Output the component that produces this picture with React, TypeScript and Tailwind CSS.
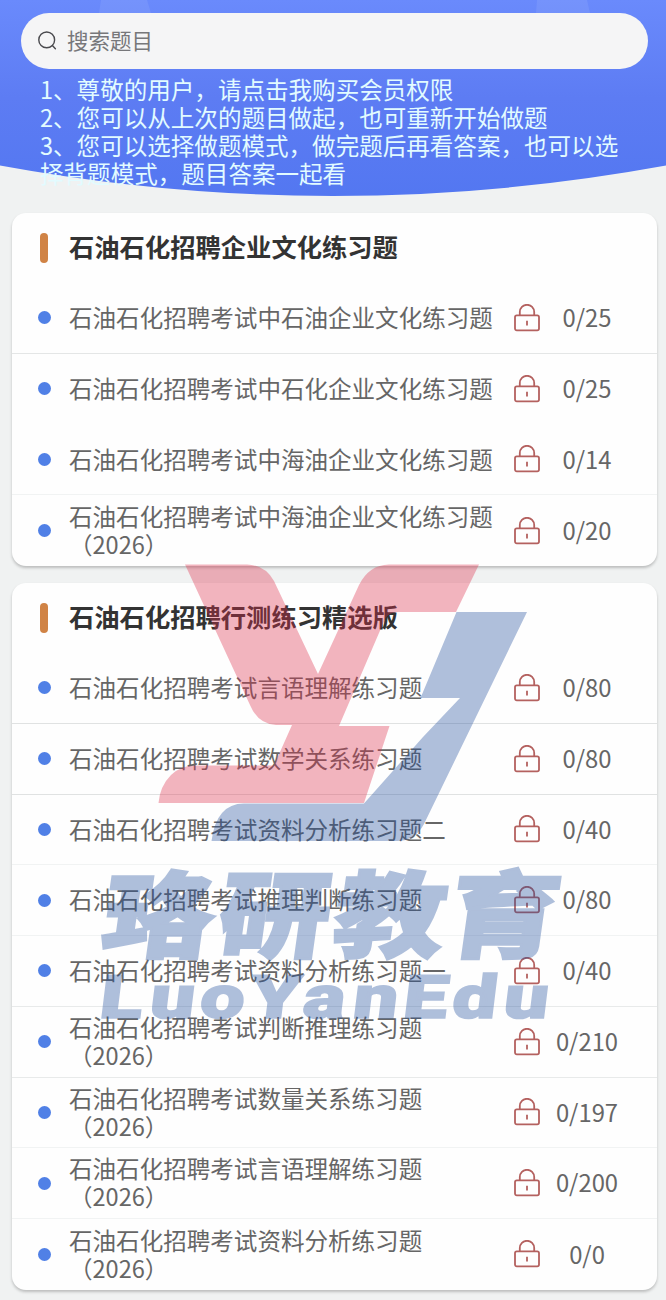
type Exercise = {
  title: string;
  year?: string;
  progress: string;
  divider?: string;
};

type Section = {
  title: string;
  items: Exercise[];
};

const sections: Section[] = [
  {
    title: "石油石化招聘企业文化练习题",
    items: [
      { title: "石油石化招聘考试中石油企业文化练习题", progress: "0/25", divider: "border-[#e4e6e6]" },
      { title: "石油石化招聘考试中石化企业文化练习题", progress: "0/25", divider: "border-transparent" },
      { title: "石油石化招聘考试中海油企业文化练习题", progress: "0/14" },
      { title: "石油石化招聘考试中海油企业文化练习题", year: "（2026）", progress: "0/20" },
    ],
  },
  {
    title: "石油石化招聘行测练习精选版",
    items: [
      { title: "石油石化招聘考试言语理解练习题", progress: "0/80", divider: "border-[#e0e2e2]" },
      { title: "石油石化招聘考试数学关系练习题", progress: "0/80", divider: "border-[#e0e2e2]" },
      { title: "石油石化招聘考试资料分析练习题二", progress: "0/40" },
      { title: "石油石化招聘考试推理判断练习题", progress: "0/80" },
      { title: "石油石化招聘考试资料分析练习题一", progress: "0/40", divider: "border-[#e8eaea]" },
      { title: "石油石化招聘考试判断推理练习题", year: "（2026）", progress: "0/210", divider: "border-[#e8eaea]" },
      { title: "石油石化招聘考试数量关系练习题", year: "（2026）", progress: "0/197" },
      { title: "石油石化招聘考试言语理解练习题", year: "（2026）", progress: "0/200" },
      { title: "石油石化招聘考试资料分析练习题", year: "（2026）", progress: "0/0" },
    ],
  },
];

const notices = [
  "1、尊敬的用户，请点击我购买会员权限",
  "2、您可以从上次的题目做起，也可重新开始做题",
  "3、您可以选择做题模式，做完题后再看答案，也可以选",
  "择背题模式，题目答案一起看",
];

function LockIcon() {
  return (
    <svg
      className="h-7 w-[26px] shrink-0"
      viewBox="0 0 26 28"
      fill="none"
      stroke="#b4615f"
      strokeWidth="1.8"
    >
      <rect x="1" y="11.4" width="24" height="15" rx="1.8" />
      <path d="M5.8 11.4V8a7.2 7.2 0 0 1 14.4 0v3.4" />
      <path d="M13 16.8v4.6" />
    </svg>
  );
}

function SearchIcon() {
  return (
    <svg
      className="h-5 w-5 shrink-0"
      viewBox="0 0 20 20"
      fill="none"
      stroke="#4a4a4e"
      strokeWidth="1.4"
      strokeLinecap="round"
    >
      <circle cx="9.7" cy="8.9" r="7.9" />
      <path d="M15.4 14.6l3 3.2" />
    </svg>
  );
}

function Header() {
  return (
    <header className="relative h-[213px] pt-[13px]">
      <svg
        className="absolute inset-x-0 top-0 h-[197px] w-full"
        viewBox="0 0 666 197"
        preserveAspectRatio="none"
      >
        <defs>
          <linearGradient id="sky" x1="0" y1="0" x2="0" y2="1">
            <stop offset="0" stopColor="#6a8afc" />
            <stop offset="0.5" stopColor="#5d7cf3" />
            <stop offset="1" stopColor="#5377f1" />
          </linearGradient>
        </defs>
        <path d="M0 0H666V165.5Q333 226.5 0 165.5Z" fill="url(#sky)" />
        <path d="M101 0h46l4 13h-52zM537 0h50l3 13h-54z" fill="#fff" fillOpacity="0.08" />
      </svg>

      <div className="relative ml-[21px] mr-[18px] flex h-14 items-center gap-2.5 rounded-full bg-[#f5f5f6] pl-4">
        <SearchIcon />
        <span className="pb-0.5 text-[21.5px] leading-none text-[#77777a]">搜索题目</span>
      </div>

      <div className="relative mt-1.5 pl-10 text-[23.56px] leading-7 text-[#e2fbff]">
        {notices.map((line) => (
          <p key={line} className="whitespace-nowrap">
            {line}
          </p>
        ))}
      </div>
    </header>
  );
}

function ExerciseRow({ item }: { item: Exercise }) {
  return (
    <li
      className={`flex h-[70.75px] items-center border-b pl-[25.5px] last:border-b-0 ${
        item.divider ?? "border-[#f1f3f3]"
      }`}
    >
      <span className="h-[13px] w-[13px] shrink-0 rounded-full bg-[#5080e6]" />
      <div className="ml-[18.5px] w-[445px] whitespace-nowrap pb-[1.5px] text-[23.56px] leading-7 text-[#666]">
        <p>{item.title}</p>
        {item.year && <p>{item.year}</p>}
      </div>
      <LockIcon />
      <span className="w-[94px] pb-[1.5px] text-center text-[23.8px] leading-7 text-[#666]">
        {item.progress}
      </span>
    </li>
  );
}

function SectionCard({ section }: { section: Section }) {
  return (
    <section className="rounded-[14px] bg-[#fefefe] shadow-[0_2px_3px_rgba(0,0,0,0.22)]">
      <div className="flex h-[70px] items-center pl-7">
        <span className="h-[30px] w-2 rounded-full bg-[#d08345]" />
        <h2 className="ml-[21px] pb-[5px] text-[25.3px] font-bold leading-8 text-[#333]">
          {section.title}
        </h2>
      </div>
      <ul>
        {section.items.map((item, index) => (
          <ExerciseRow key={index} item={item} />
        ))}
      </ul>
    </section>
  );
}

function Watermark() {
  return (
    <svg
      className="pointer-events-none absolute left-0 top-0 h-[1300px] w-[666px]"
      viewBox="0 0 666 1300"
    >
      <path
        fill="#dd2c48"
        fillOpacity="0.35"
        d="M185 564.5H247Q265 565 274 581L318 674L359 585Q369 565 389 564.5H479L456 612H398Q389 612 385 619L339 726H389.5L364 803H158.5Q160 786 171 775Q180 766 194 765.5H274L292 725H276Q258 724 250 705Z"
      />
      <path
        fill="#1d4b9b"
        fillOpacity="0.35"
        d="M456.5 612H527L424 824Q415 841 397 841H211.5Q214 822 222 813Q230 803.5 244 803.5H364L423 737L460 698H420.5Z"
      />
      <g fill="#1d4b9b" stroke="#1d4b9b" fontWeight="900" opacity="0.35">
        <text
          transform="translate(99 950) skewX(-8) scale(1.18 1)"
          x="0 98 196 293"
          fontSize="94"
          strokeWidth="2.5"
        >
          珞研教育
        </text>
        <text
          className="font-['Roboto']"
          transform="translate(98 1018) skewX(-7) scale(1.32 1)"
          x="0 38 76 114 154 192 230 267 306"
          fontSize="60"
          strokeWidth="1.5"
        >
          LuoYanEdu
        </text>
      </g>
    </svg>
  );
}

export default function App() {
  return (
    <div
      lang="zh-CN"
      className="relative h-[1300px] w-[666px] overflow-hidden bg-[#f0f2f2] font-['Noto_Sans_CJK_SC',sans-serif]"
    >
      <Header />
      <main className="flex flex-col gap-[17px] pl-3 pr-[9px]">
        {sections.map((section) => (
          <SectionCard key={section.title} section={section} />
        ))}
      </main>
      <Watermark />
    </div>
  );
}
